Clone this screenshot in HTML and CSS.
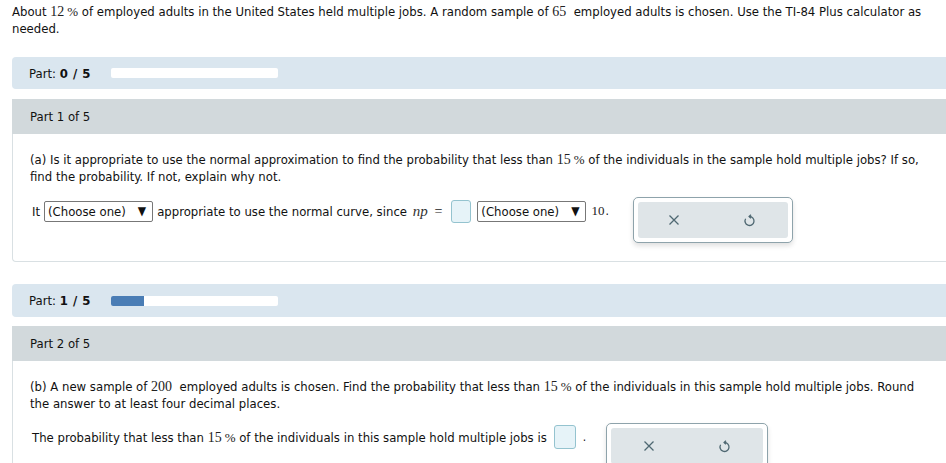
FILE: index.html
```html
<!DOCTYPE html>
<html>
<head>
<meta charset="utf-8">
<link rel="stylesheet" href="styles.css">
</head>
<body>
<div class="page">
  <p class="intro">About <span class="m">12</span><span class="m pct">%</span> of employed adults in the United States held multiple jobs. A random sample of <span class="m">65</span>&nbsp; employed adults is chosen. Use the TI-84 Plus calculator as needed.</p>

  <div class="progress">
    <span class="plabel">Part: <b>0 / 5</b></span>
    <div class="track"><div class="fill" style="width:0%"></div></div>
  </div>
  <div class="part">
    <div class="part-head">Part 1 of 5</div>
    <div class="part-body">
      <p class="q">(a) Is it appropriate to use the normal approximation to find the probability that less than <span class="m">15</span><span class="m pct">%</span> of the individuals in the sample hold multiple jobs? If so, find the probability. If not, explain why not.</p>
      <div class="answer-row">
        <div class="answer">
          <span>It</span>
          <span class="select">(Choose one)<span class="arrow">▼</span></span>
          <span>appropriate to use the normal curve, since <span class="mi">np</span> <span class="m eq">=</span></span>
          <span class="box"></span>
          <span class="select">(Choose one)<span class="arrow">▼</span></span>
          <span class="ten"><span class="m">10</span><span class="dot">.</span></span>
        </div>
        <div class="tools">
          <div class="tools-in">
            <svg width="12" height="12" viewBox="0 0 12 12"><path d="M1.5 1.5 L10.5 10.5 M10.5 1.5 L1.5 10.5" stroke="#4f6872" stroke-width="1.3" fill="none"/></svg>
            <svg width="13" height="14" viewBox="0 0 13 14"><path d="M6.5 3.5 A4.5 4.5 0 1 1 2.6 5.75" stroke="#4f6872" stroke-width="1.3" fill="none"/><path d="M8 1.7 L6.1 3.5 L8 5.3" stroke="#4f6872" stroke-width="1.3" fill="none"/></svg>
          </div>
        </div>
      </div>
    </div>
  </div>

  <div class="progress p2">
    <span class="plabel">Part: <b>1 / 5</b></span>
    <div class="track"><div class="fill" style="width:20%"></div></div>
  </div>
  <div class="part">
    <div class="part-head">Part 2 of 5</div>
    <div class="part-body body2">
      <p class="q">(b) A new sample of <span class="m">200</span>&nbsp; employed adults is chosen. Find the probability that less than <span class="m">15</span><span class="m pct">%</span> of the individuals in this sample hold multiple jobs. Round the answer to at least four decimal places.</p>
      <div class="answer-row row2">
        <div class="answer">
          <span>The probability that less than <span class="m">15</span><span class="m pct">%</span> of the individuals in this sample hold multiple jobs is</span>
          <span class="box box2"></span><span class="dot">.</span>
        </div>
        <div class="tools tools2">
          <div class="tools-in">
            <svg width="12" height="12" viewBox="0 0 12 12"><path d="M1.5 1.5 L10.5 10.5 M10.5 1.5 L1.5 10.5" stroke="#4f6872" stroke-width="1.3" fill="none"/></svg>
            <svg width="13" height="14" viewBox="0 0 13 14"><path d="M6.5 3.5 A4.5 4.5 0 1 1 2.6 5.75" stroke="#4f6872" stroke-width="1.3" fill="none"/><path d="M8 1.7 L6.1 3.5 L8 5.3" stroke="#4f6872" stroke-width="1.3" fill="none"/></svg>
          </div>
        </div>
      </div>
    </div>
  </div>
</div>
</body>
</html>
```

FILE: styles.css
```css
html, body {
  margin: 0;
  padding: 0;
  overflow: hidden;
  background: #fff;
}
body {
  font-family: "DejaVu Sans Condensed", "DejaVu Sans", sans-serif;
  font-size: 13px;
  color: #111;
  line-height: 17px;
}
.page {
  width: 960px;
  padding-left: 12px;
}
.intro {
  margin: 0;
  padding: 3px 30px 0 0;
}
.m {
  font-family: "Liberation Serif", "Times New Roman", serif;
  font-size: 14px;
  color: #222;
}
.pct { margin-left: 3px; font-size: 13px; }
.mi {
  font-family: "Liberation Serif", serif;
  font-style: italic;
  font-size: 15px;
  color: #333;
  margin-left: 2px;
}
.progress {
  margin-top: 20px;
  height: 32px;
  background: #dae6ef;
  border-radius: 4px 0 0 4px;
  display: flex;
  align-items: center;
  padding-left: 17px;
}
.p2 { margin-top: 22px; height: 33px; }
.plabel { width: 82px; }
.plabel b { font-weight: bold; letter-spacing: 0.5px; }
.track {
  width: 167px;
  height: 10px;
  background: #fff;
  border-radius: 2px;
  overflow: hidden;
}
.fill {
  height: 100%;
  background: #4a7db5;
}
.part {
  margin-top: 10px;
  border: 1px solid #d9e0e3;
  border-right: none;
  border-top: none;
  border-radius: 4px 0 0 4px;
}
.p2 + .part { margin-top: 9px; }
.part-head {
  height: 35px;
  background: #d2d9dc;
  display: flex;
  align-items: center;
  padding-left: 18px;
  margin-left: -1px;
}
.part-body {
  padding: 17px 36px 18px 17px;
}
.q {
  margin: 0;
}
.answer-row {
  display: flex;
  align-items: flex-start;
  margin-top: 13px;
}
.answer {
  display: flex;
  align-items: center;
  gap: 4px;
  height: 24px;
  margin-top: 1px;
  padding-left: 2px;
}
.select {
  display: inline-flex;
  align-items: center;
  height: 19px;
  border: 1px solid #777;
  border-radius: 2px;
  padding: 0 6px 0 3px;
  white-space: nowrap;
}
.arrow { margin-left: 12px; font-size: 12px; }
.eq { margin-left: 3px; }
.box {
  width: 20px;
  height: 23px;
  box-sizing: border-box;
  background: #e6f3f8;
  border: 1px solid #94c3cf;
  border-radius: 3px;
  margin: 0 2px 0 5px;
}
.box2 { width: 22px; height: 24px; margin-left: 3px; }
.ten { margin-left: 1px; }
.ten .m { font-size: 13px; }
.dot { font-size: 12px; margin-left: 1px; }
.tools {
  margin-left: 24px;
  margin-top: -1px;
  width: 160px;
  height: 46px;
  border: 1px solid #8ea3ab;
  border-radius: 5px;
  padding: 4px;
  box-sizing: border-box;
  box-shadow: 0 3px 5px rgba(0,0,0,0.12);
  background: #fff;
}
.tools-in {
  height: 100%;
  background: #dfe5e8;
  border-radius: 3px;
  display: flex;
  align-items: center;
  justify-content: center;
  gap: 63px;
  padding-right: 1px;
}
.body2 { padding-top: 17px; }
.row2 { margin-top: 12px; }
.tools2 { margin-left: 20px; width: 162px; }
```
